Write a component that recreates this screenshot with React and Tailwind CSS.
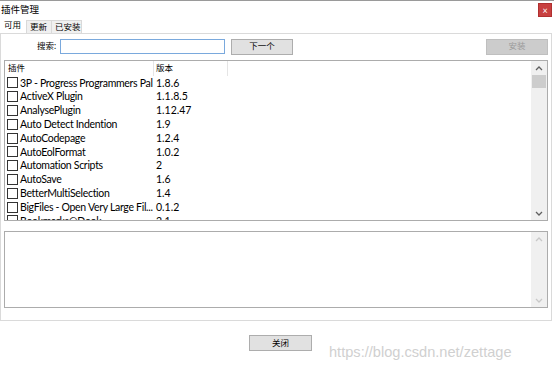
import React from 'react';

const plugins = [
    ['3P - Progress Programmers Pal', '1.8.6'],
    ['ActiveX Plugin', '1.1.8.5'],
    ['AnalysePlugin', '1.12.47'],
    ['Auto Detect Indention', '1.9'],
    ['AutoCodepage', '1.2.4'],
    ['AutoEolFormat', '1.0.2'],
    ['Automation Scripts', '2'],
    ['AutoSave', '1.6'],
    ['BetterMultiSelection', '1.4'],
    ['BigFiles - Open Very Large Fil...', '0.1.2'],
    ['Bookmarks@Dook', '2.1'],
];

const font = { fontFamily: 'Lato, "Noto Sans CJK SC", sans-serif' };

const ScrollBar = ({ disabled }) => (
    <div className="flex flex-col w-[16px] bg-[#f0f0f0] h-full shrink-0">
        <div className="h-[14px] flex items-center justify-center">
            <svg width="8" height="5" viewBox="0 0 8 5">
                <path d="M1 4 L4 1 L7 4" fill="none" stroke={disabled ? '#c8c8c8' : '#606060'} strokeWidth="1.3" />
            </svg>
        </div>
        <div className="flex-1">
            {!disabled && <div className="h-[13px] mx-[1px] bg-[#cdcdcd]" />}
        </div>
        <div className="h-[14px] flex items-center justify-center">
            <svg width="8" height="5" viewBox="0 0 8 5">
                <path d="M1 1 L4 4 L7 1" fill="none" stroke={disabled ? '#c8c8c8' : '#606060'} strokeWidth="1.3" />
            </svg>
        </div>
    </div>
);

const App = () => {
    return (
        <div className="w-[554px] h-[369px] bg-white relative overflow-hidden text-[#000]" style={font}>
            <div className="h-[1px] bg-[#9a9a9a]" />
            <div className="flex items-center justify-between h-[16px]">
                <span className="text-[9.5px] leading-none pl-[1px] pt-[2px]">插件管理</span>
                <div className="w-[14px] h-[14px] bg-[#c84040] mr-[2px] mt-[2px] flex items-center justify-center text-white text-[9px] leading-none border border-[#b03030]">×</div>
            </div>
            <div className="flex items-end h-[15px] mt-[1px] text-[8.5px] leading-none">
                <div className="pl-[4px] pr-[2px] h-[15px] flex items-center bg-white whitespace-nowrap">可用</div>
                <div className="ml-[3px] w-[26px] pl-[3px] h-[13px] flex items-center bg-[#f0f0f0] border border-[#d9d9d9] border-b-0 whitespace-nowrap">更新</div>
                <div className="w-[30px] pl-[3px] h-[13px] flex items-center bg-[#f0f0f0] border border-[#d9d9d9] border-b-0 border-l-0 whitespace-nowrap">已安装</div>
            </div>
            <div className="w-[552px] h-[288px] border border-[#dadada] flex flex-col">
                <div className="flex items-center h-[21px] mt-[2px] text-[8.5px]">
                    <span className="ml-[36px] w-[23px] whitespace-nowrap">搜索:</span>
                    <div className="w-[165px] h-[15px] border border-[#7aa9dd]" />
                    <button className="ml-[6px] w-[62px] h-[16px] bg-[#e1e1e1] border border-[#adadad] leading-none">下一个</button>
                    <button className="ml-auto mr-[3px] w-[62px] h-[16px] bg-[#cccccc] border border-[#bfbfbf] text-[#9a9a9a] leading-none">安装</button>
                </div>
                <div className="mx-[3px] h-[161px] border border-[#acacac] flex mt-[3px]">
                    <div className="flex-1 overflow-hidden">
                        <div className="flex h-[15px] items-center text-[8.5px] leading-none">
                            <div className="w-[149px] pl-[3px] h-full flex items-center border-r border-[#e5e5e5]">插件</div>
                            <div className="w-[74px] pl-[2px] h-full flex items-center border-r border-[#e5e5e5]">版本</div>
                        </div>
                        {plugins.map(([name, ver]) => (
                            <div key={name} className="flex items-center h-[13.8px] text-[10.5px] tracking-[-0.3px] leading-none">
                                <div className="w-[11px] h-[11px] border border-[#333] ml-[2px] mr-[2px] shrink-0" />
                                <span className="w-[134px] whitespace-nowrap">{name}</span>
                                <span className="pl-[2px] tracking-normal">{ver}</span>
                            </div>
                        ))}
                    </div>
                    <ScrollBar />
                </div>
                <div className="mx-[3px] mt-[10px] h-[77px] border border-[#acacac] flex">
                    <div className="flex-1" />
                    <ScrollBar disabled />
                </div>
            </div>
            <div className="flex justify-center mt-[14px] pl-[7px]">
                <button className="w-[63px] h-[16px] bg-[#e1e1e1] border border-[#adadad] text-[8.5px] leading-none">关闭</button>
            </div>
            <div className="absolute left-[329px] top-[342px] text-[14.6px] text-[#d0d0d0]" style={{ fontFamily: '"Liberation Sans", sans-serif' }}>
                https://blog.csdn.net/zettage
            </div>
        </div>
    );
};

export default App;
